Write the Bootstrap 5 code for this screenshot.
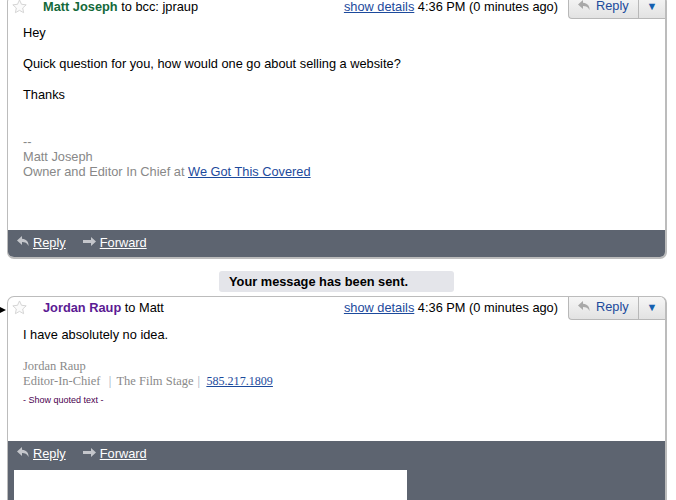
<!DOCTYPE html>
<html lang="en"><head><meta charset="utf-8"><title>Mail thread</title>
<link href="https://cdn.jsdelivr.net/npm/bootstrap@5.3.0/dist/css/bootstrap.min.css" rel="stylesheet">
<style>
html,body{height:500px;overflow:hidden;background:#fff}
body{font-family:"Liberation Sans",Arial,sans-serif;font-size:12.8px;line-height:15px;color:#000}
a{color:#1c4a9c}
.thread{width:660px;margin:-5px 0 0 7px;position:relative}
.msgbox{border:1px solid #bcbcbc;border-width:1px 2px 2px 1px;border-radius:7px;background:#fff;overflow:hidden}
.msg1{height:264px}
.msg2{height:220px;border-bottom:0;border-radius:7px 7px 0 0}
.msghead{height:23px;flex:none}
.staricon{margin:3px 0 0 4px;width:15px;height:15px;flex:none}
.who{margin-left:16px;padding-top:3px}
.sender1{color:#13693a;font-weight:700}
.sender2{color:#5b1a93;font-weight:700}
.metainfo{padding-top:3px;margin-right:10px}
.replybtn{height:23px;width:97px;border:solid #b8b8b8;border-width:0 0 1px 1px;border-radius:0 0 0 4px;background:linear-gradient(#f6f6f6,#e2e2e2);color:#1c4a9c;line-height:11px}
.replymain{width:70px;padding:0 0 4px 8px;gap:4px;border-right:1px solid #b8b8b8;height:100%}
.replyarrow{flex:1;text-align:center;font-size:11px;color:#1560b0;padding-bottom:2px}
.msgbody{padding:6px 15px 0}
.msgbody2{padding-top:7px;height:121px;flex:none}
.gray{color:#888}
.sigspace{margin-top:32px}
.para{margin-top:16px}
.sigfont{font-family:"Liberation Serif",serif;font-size:12.5px;color:#8a8a8a;margin-top:17px}
.sigfont a{font-size:12.1px}
.sigbar{color:#9ab;margin:0 2px}
.sigbarend{color:#9ab;margin-left:1px}
.quoted{font-size:9px;color:#4b0050;line-height:12px;margin-top:5px}
.actionbar{background:#5d6470;height:27px;padding:5px 0 0 8px;color:#fff;flex:none}
.actionbar a{color:#fff;margin-right:16px}
.actionbar svg{margin-right:2px;position:relative;top:-2px}
.actionbar svg.fwdicon{margin-right:3px}
.notice{width:235px;height:21px;margin:12px 0 4px 212px;padding-left:10px;background:#e4e5ea;border-radius:3px;font-weight:700;line-height:21px}
.pointer{position:absolute;left:-7px;top:312px;border-left:6px solid #000;border-top:3px solid transparent;border-bottom:3px solid transparent}
.composearea{background:#5d6470;flex:none;height:90px}
.composearea .actionbar{height:29px}
.composebox{width:393px;height:60px;background:#fff;margin-left:6px}
</style></head><body>
<svg width="0" height="0" class="position-absolute"><defs>
<symbol id="star" viewBox="0 0 16 16"><path d="M8 1l2.100 4.600 5 .6-3.700 3.400 1 5L8 12.100l-4.400 2.500 1-5L.9 6.200l5-.6z" fill="#fbfbfb" stroke="#d2d2d2"/></symbol>
<symbol id="back" viewBox="0 0 15 13"><path d="M6 1L1 5.500 6 10V7c3 0 5 .8 6.500 4 .4-4-2-7-6.500-7.300z"/></symbol>
<symbol id="fwd" viewBox="0 0 15 11"><path d="M1 4h8V1l5 4.500L9 10V7H1z"/></symbol>
</defs></svg>
<div class="thread">
<div class="msgbox msg1 d-flex flex-column">
<div class="msghead d-flex align-items-start">
<svg class="staricon"><use href="#star"/></svg>
<div class="who flex-grow-1"><span class="sender1">Matt Joseph</span> to bcc: jpraup</div>
<div class="metainfo"><a href="#">show details</a> 4:36 PM (0 minutes ago)</div>
<div class="replybtn d-flex align-items-center">
<div class="replymain d-flex align-items-center"><svg width="15" height="13" fill="#a8a8a8"><use href="#back"/></svg>Reply</div><div class="replyarrow">▼</div></div>
</div>
<div class="msgbody flex-grow-1">
<div>Hey</div><div class="para">Quick question for you, how would one go about selling a website?</div><div class="para">Thanks</div>
<div class="gray sigspace">--<br>Matt Joseph<br>Owner and Editor In Chief at <a href="#">We Got This Covered</a></div>
</div>
<div class="actionbar"><svg width="15" height="13" fill="#c4c6cb"><use href="#back"/></svg><a href="#">Reply</a><svg class="fwdicon" width="15" height="11" fill="#c4c6cb"><use href="#fwd"/></svg><a href="#">Forward</a></div>
</div>
<div class="notice">Your message has been sent.</div>
<span class="pointer"></span>
<div class="msgbox msg2 d-flex flex-column">
<div class="msghead d-flex align-items-start">
<svg class="staricon"><use href="#star"/></svg>
<div class="who flex-grow-1"><span class="sender2">Jordan Raup</span> to Matt</div>
<div class="metainfo"><a href="#">show details</a> 4:36 PM (0 minutes ago)</div>
<div class="replybtn d-flex align-items-center">
<div class="replymain d-flex align-items-center"><svg width="15" height="13" fill="#a8a8a8"><use href="#back"/></svg>Reply</div><div class="replyarrow">▼</div></div>
</div>
<div class="msgbody msgbody2">
<div>I have absolutely no idea.</div>
<div class="sigfont">Jordan Raup<br>Editor-In-Chief &nbsp;<span class="sigbar">|</span>&nbsp;The Film Stage <span class="sigbarend">|</span>&nbsp; <a href="#">585.217.1809</a></div>
<div class="quoted">- Show quoted text -</div>
</div>
<div class="composearea">
<div class="actionbar"><svg width="15" height="13" fill="#c4c6cb"><use href="#back"/></svg><a href="#">Reply</a><svg class="fwdicon" width="15" height="11" fill="#c4c6cb"><use href="#fwd"/></svg><a href="#">Forward</a></div>
<div class="composebox"></div>
</div>
</div>
</div>
</body></html>
